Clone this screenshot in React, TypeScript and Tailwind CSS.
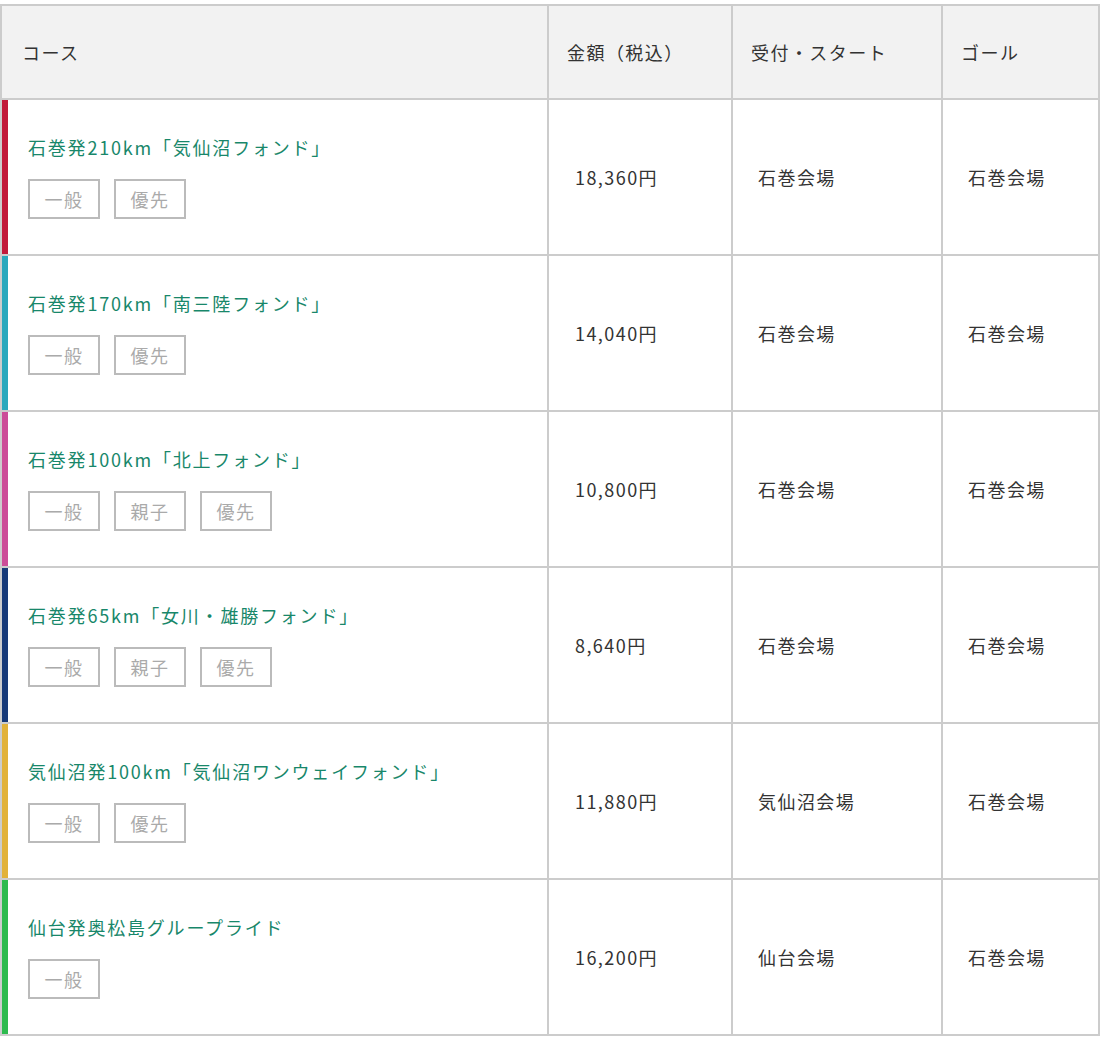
const rows = [
  { bar: 'bg-[#c21a3a]', name: '石巻発210km「気仙沼フォンド」', tags: ['一般', '優先'], price: '18,360円', start: '石巻会場', goal: '石巻会場' },
  { bar: 'bg-[#2aa8bd]', name: '石巻発170km「南三陸フォンド」', tags: ['一般', '優先'], price: '14,040円', start: '石巻会場', goal: '石巻会場' },
  { bar: 'bg-[#cc4d98]', name: '石巻発100km「北上フォンド」', tags: ['一般', '親子', '優先'], price: '10,800円', start: '石巻会場', goal: '石巻会場' },
  { bar: 'bg-[#173a78]', name: '石巻発65km「女川・雄勝フォンド」', tags: ['一般', '親子', '優先'], price: '8,640円', start: '石巻会場', goal: '石巻会場' },
  { bar: 'bg-[#e2b23a]', name: '気仙沼発100km「気仙沼ワンウェイフォンド」', tags: ['一般', '優先'], price: '11,880円', start: '気仙沼会場', goal: '石巻会場' },
  { bar: 'bg-[#2dba4e]', name: '仙台発奥松島グループライド', tags: ['一般'], price: '16,200円', start: '仙台会場', goal: '石巻会場' },
]

export default function App() {
  return (
    <div className="bg-white pt-[4px] text-[18px] text-[#333] tracking-[0.08em]" style={{ fontFamily: '"Noto Sans CJK JP", "Noto Sans", sans-serif' }}>
      <div className="w-[1100px] border-2 border-[#cccccc]">
        <div className="flex h-[94px] border-b-2 border-[#cccccc] bg-[#f2f2f2] items-center">
          <div className="w-[547px] h-full flex items-center pl-[20px] border-r-2 border-[#cccccc]">コース</div>
          <div className="w-[184px] h-full flex items-center pl-[18px] border-r-2 border-[#cccccc]">金額（税込）</div>
          <div className="w-[210px] h-full flex items-center pl-[18px] border-r-2 border-[#cccccc]">受付・スタート</div>
          <div className="flex-1 h-full flex items-center pl-[18px]">ゴール</div>
        </div>
        {rows.map((r, i) => (
          <div key={i} className={`flex ${i < rows.length - 1 ? 'h-[156px] border-b-2 border-[#cccccc]' : 'h-[154px]'}`}>
            <div className="w-[547px] flex border-r-2 border-[#cccccc]">
              <div className={`w-[6px] ${r.bar}`} />
              <div className="flex flex-col justify-center pl-[20px] gap-[20px]">
                <div className="text-[#18876a] leading-[24px] tracking-[0.1em]">{r.name}</div>
                <div className="flex gap-[14px]">
                  {r.tags.map(t => (
                    <span key={t} className="w-[72px] h-[40px] border-2 border-[#bbbbbb] text-[#aaaaaa] flex items-center justify-center">{t}</span>
                  ))}
                </div>
              </div>
            </div>
            <div className="w-[184px] flex items-center pl-[26px] border-r-2 border-[#cccccc]">{r.price}</div>
            <div className="w-[210px] flex items-center pl-[25px] border-r-2 border-[#cccccc]">{r.start}</div>
            <div className="flex-1 flex items-center pl-[25px]">{r.goal}</div>
          </div>
        ))}
      </div>
    </div>
  )
}
